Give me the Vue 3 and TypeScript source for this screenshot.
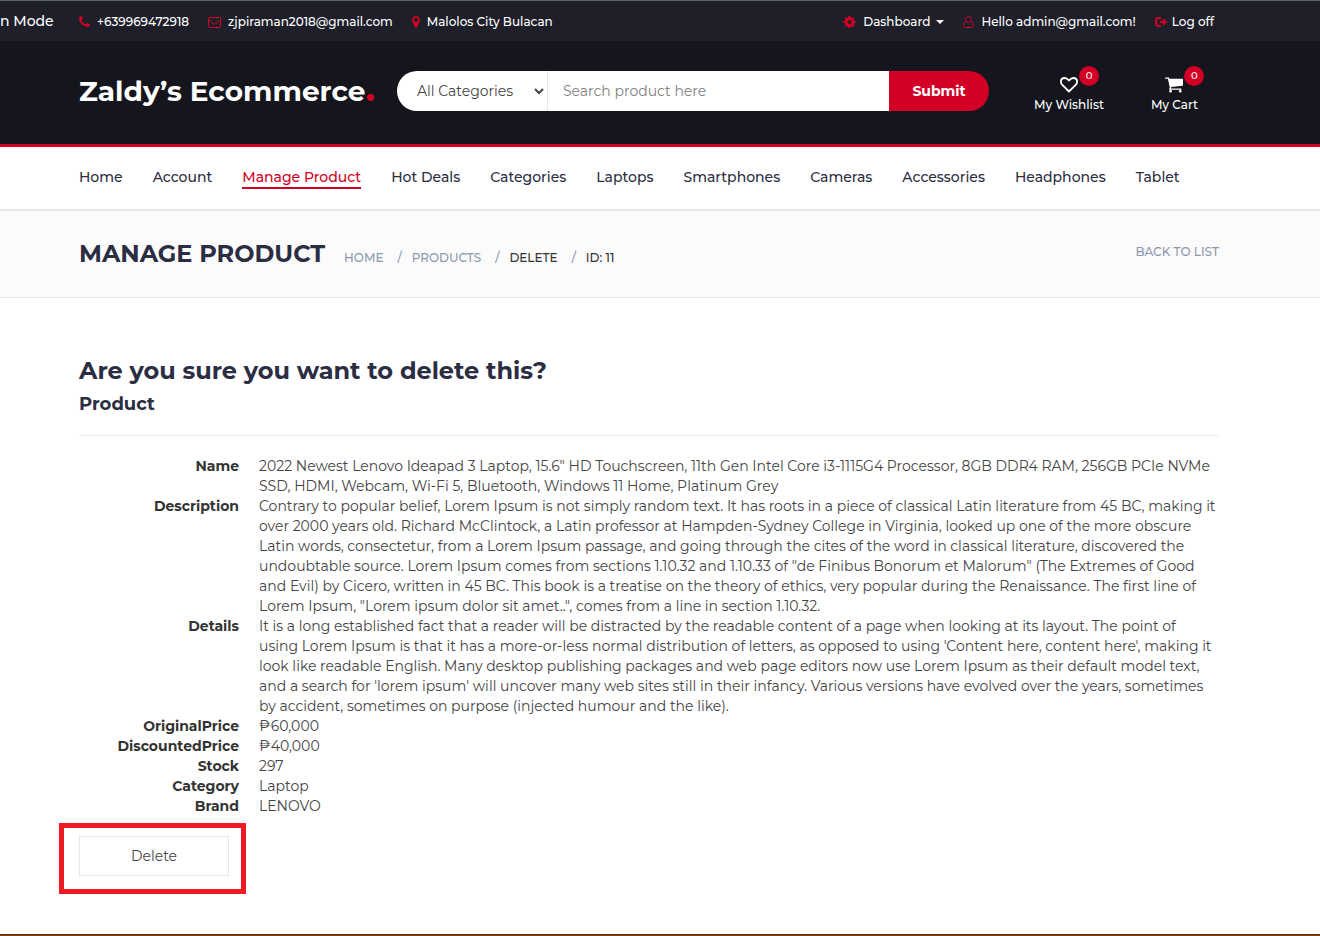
<script setup lang="ts">
import { ref } from 'vue'

interface NavLink { label: string; active?: boolean }
interface Field { term: string; value: string }

const phonePath = 'M1600 1240q0 27-10 70.5t-21 68.5q-21 50-122 106-94 51-186 51-27 0-53-3.5t-57.5-12.5-47-14.5-55.5-20.5-49-18q-98-35-175-83-127-79-264-216t-216-264q-48-77-83-175-3-9-18-49t-20.5-55.5-14.5-47-12.5-57.5-3.5-53q0-92 51-186 56-101 106-122 25-11 68.5-21t70.5-10q14 0 21 3 18 6 53 76 11 19 30 54t35 63.5 31 53.5q3 4 17.5 25t21.5 35.5 7 28.5q0 20-28.5 50t-62 55-62 53-28.5 46q0 9 5 22.5t8.5 20.5 14 24 11.5 19q76 137 174 235t235 174q2 1 19 11.5t24 14 20.5 8.5 22.5 5q18 0 46-28.5t53-62 55-62 50-28.5q14 0 28.5 7t35.5 21.5 25 17.5q25 15 53.5 31t63.5 35 54 30q70 35 76 53 3 7 3 21z'
const markerPath = 'M1152 640q0-106-75-181t-181-75-181 75-75 181 75 181 181 75 181-75 75-181zm256 0q0 109-33 179l-364 774q-16 33-47.5 52t-67.5 19-67.5-19-46.5-52l-365-774q-33-70-33-179 0-212 150-362t362-150 362 150 150 362z'
const cogPath = 'M1152 896q0-106-75-181t-181-75-181 75-75 181 75 181 181 75 181-75 75-181zm512-109v222q0 12-8 23t-20 13l-185 28q-19 54-39 91 35 50 107 138 10 12 10 25t-9 23q-27 37-99 108t-94 71q-12 0-26-9l-138-108q-44 23-91 38-16 136-29 186-7 28-36 28h-222q-14 0-24.5-8.5t-11.5-21.5l-28-184q-49-16-90-37l-141 107q-10 9-25 9-14 0-25-11-126-114-165-168-7-10-7-23 0-12 8-23 15-21 51-66.5t54-70.5q-27-50-41-99l-183-27q-13-2-21-12.5t-8-23.5v-222q0-12 8-23t19-13l186-28q14-46 39-92-40-57-107-138-10-12-10-24 0-10 9-23 26-36 98.5-107.5t94.5-71.5q13 0 26 10l138 107q44-23 91-38 16-136 29-186 7-28 36-28h222q14 0 24.5 8.5t11.5 21.5l28 184q49 16 90 37l142-107q9-9 24-9 13 0 25 10 129 119 165 170 7 8 7 22 0 12-8 23-15 21-51 66.5t-54 70.5q26 50 41 98l183 28q13 2 21 12.5t8 23.5z'
const cartPath = 'M704 1536q0 52-38 90t-90 38-90-38-38-90 38-90 90-38 90 38 38 90zm896 0q0 52-38 90t-90 38-90-38-38-90 38-90 90-38 90 38 38 90zm128-1088v512q0 24-16.5 42.5t-40.5 21.5l-1044 122q13 60 13 70 0 16-24 64h920q26 0 45 19t19 45-19 45-45 19h-1024q-26 0-45-19t-19-45q0-11 8-31.5t16-36 21.5-40 15.5-29.5l-177-823h-204q-26 0-45-19t-19-45 19-45 45-19h256q16 0 28.5 6.5t19.5 15.5 13 24.5 8 26 5.5 29.5 4.5 26h1201q26 0 45 19t19 45z'

const navLinks: NavLink[] = [
  { label: 'Home' },
  { label: 'Account' },
  { label: 'Manage Product', active: true },
  { label: 'Hot Deals' },
  { label: 'Categories' },
  { label: 'Laptops' },
  { label: 'Smartphones' },
  { label: 'Cameras' },
  { label: 'Accessories' },
  { label: 'Headphones' },
  { label: 'Tablet' },
]

const fields: Field[] = [
  { term: 'Name', value: '2022 Newest Lenovo Ideapad 3 Laptop, 15.6" HD Touchscreen, 11th Gen Intel Core i3-1115G4 Processor, 8GB DDR4 RAM, 256GB PCIe NVMe SSD, HDMI, Webcam, Wi-Fi 5, Bluetooth, Windows 11 Home, Platinum Grey' },
  { term: 'Description', value: 'Contrary to popular belief, Lorem Ipsum is not simply random text. It has roots in a piece of classical Latin literature from 45 BC, making it over 2000 years old. Richard McClintock, a Latin professor at Hampden-Sydney College in Virginia, looked up one of the more obscure Latin words, consectetur, from a Lorem Ipsum passage, and going through the cites of the word in classical literature, discovered the undoubtable source. Lorem Ipsum comes from sections 1.10.32 and 1.10.33 of "de Finibus Bonorum et Malorum" (The Extremes of Good and Evil) by Cicero, written in 45 BC. This book is a treatise on the theory of ethics, very popular during the Renaissance. The first line of Lorem Ipsum, "Lorem ipsum dolor sit amet..", comes from a line in section 1.10.32.' },
  { term: 'Details', value: "It is a long established fact that a reader will be distracted by the readable content of a page when looking at its layout. The point of using Lorem Ipsum is that it has a more-or-less normal distribution of letters, as opposed to using 'Content here, content here', making it look like readable English. Many desktop publishing packages and web page editors now use Lorem Ipsum as their default model text, and a search for 'lorem ipsum' will uncover many web sites still in their infancy. Various versions have evolved over the years, sometimes by accident, sometimes on purpose (injected humour and the like)." },
  { term: 'OriginalPrice', value: '₱60,000' },
  { term: 'DiscountedPrice', value: '₱40,000' },
  { term: 'Stock', value: '297' },
  { term: 'Category', value: 'Laptop' },
  { term: 'Brand', value: 'LENOVO' },
]

const category = ref('All Categories')
const query = ref('')
</script>

<template>
  <div class="page">
    <div class="topbar">
      <span class="mode">n Mode</span>
      <div class="container topbar-row">
        <div class="group">
          <a href="#" class="top-link">
            <svg class="icon w11" viewBox="192 0 1408 1792"><path :d="phonePath" /></svg>+639969472918
          </a>
          <a href="#" class="top-link">
            <svg class="icon line w13" viewBox="0 0 13 14"><rect x="0.5" y="2.5" width="12" height="10" rx="1" /><path d="M0.5 4.8l4.6 3.7q1.4 1 2.8 0L12.5 4.8" /></svg>zjpiraman2018@gmail.com
          </a>
          <a href="#" class="top-link">
            <svg class="icon w8" viewBox="384 0 1024 1792"><path :d="markerPath" /></svg>Malolos City Bulacan
          </a>
        </div>
        <div class="group session">
          <a href="#" class="top-link">
            <svg class="icon w13" viewBox="128 0 1536 1792"><path :d="cogPath" /></svg>Dashboard<i class="caret"></i>
          </a>
          <a href="#" class="top-link">
            <svg class="icon line w11" viewBox="0 0 11 14"><circle cx="5.5" cy="4.5" r="3" /><path d="M2.8 6.6Q.5 7.4.5 10.5.5 12.5 2.5 12.5H8.5Q10.5 12.5 10.5 10.5 10.5 7.4 8.2 6.6" /></svg>Hello admin@gmail.com!
          </a>
          <a href="#" class="top-link">
            <svg class="icon exit" viewBox="0 0 13 14"><path d="M6 2H3Q0 2 0 5V9Q0 12 3 12H6V10H3Q2 10 2 9V5Q2 4 3 4H6ZM5 6H8V3.4L12.6 7 8 10.6V8H5Z" /></svg>Log off
          </a>
        </div>
      </div>
    </div>

    <header class="header">
      <div class="container header-row">
        <a href="#" class="logo">Zaldy’s Ecommerce<span class="dot">.</span></a>
        <form class="search" @submit.prevent>
          <select v-model="category" class="select" aria-label="Category">
            <option>All Categories</option>
          </select>
          <input v-model="query" class="input" type="text" placeholder="Search product here" aria-label="Search product">
          <button class="submit" type="submit">Submit</button>
        </form>
        <div class="shop-links">
          <a href="#" class="shop-link">
            <svg class="shop-icon heart" viewBox="0 0 20 18"><path d="M10 16.2L2.8 9.2Q1 7.4 1 5.3 1 1.2 5.2 1.2 7.5 1.2 10 4 12.5 1.2 14.8 1.2 19 1.2 19 5.3 19 7.4 17.2 9.2Z" /></svg>
            <span>My Wishlist</span>
            <span class="badge">0</span>
          </a>
          <a href="#" class="shop-link">
            <svg class="shop-icon" viewBox="64 192 1664 1536"><path :d="cartPath" /></svg>
            <span>My Cart</span>
            <span class="badge">0</span>
          </a>
        </div>
      </div>
    </header>

    <nav class="nav">
      <div class="container nav-row">
        <a v-for="link in navLinks" :key="link.label" href="#" class="nav-link" :class="{ active: link.active }">{{ link.label }}</a>
      </div>
    </nav>

    <section class="crumb-bar">
      <div class="container crumb-row">
        <h3 class="crumb-title">MANAGE PRODUCT</h3>
        <ol class="crumbs">
          <li><a href="#">HOME</a></li>
          <li><a href="#">PRODUCTS</a></li>
          <li class="current">DELETE</li>
          <li class="current">ID: 11</li>
        </ol>
        <a href="#" class="back">BACK TO LIST</a>
      </div>
    </section>

    <main class="container main">
      <h3 class="question">Are you sure you want to delete this?</h3>
      <h4 class="subject">Product</h4>
      <hr class="rule">
      <dl class="fields">
        <template v-for="field in fields" :key="field.term">
          <dt>{{ field.term }}</dt>
          <dd>{{ field.value }}</dd>
        </template>
      </dl>
      <form class="delete-frame" @submit.prevent>
        <button type="submit" class="delete">Delete</button>
      </form>
    </main>
    <div class="footer-edge"></div>
  </div>
</template>

<style>
body { margin: 0; background: #fff; }
</style>

<style scoped>
* { box-sizing: border-box; }
.page {
  font-family: Montserrat, Inter, "Noto Sans", sans-serif;
  font-size: 14px;
  line-height: 20px;
  font-weight: 400;
  color: #333;
  overflow-x: hidden;
}
a { color: inherit; text-decoration: none; }
.container { max-width: 1164px; margin: 0 auto; padding: 0 23px 0 1px; }

.topbar { position: relative; background: #1e1f29; border-top: 1px solid #5f6360; color: #fff; }
.mode { position: absolute; left: 0; top: 10px; font-weight: 500; }
.topbar-row { display: flex; justify-content: space-between; height: 40px; align-items: center; padding-top: 2px; }
.group { display: flex; gap: 19px; }
.session { padding-right: 5px; }
.top-link { display: flex; align-items: center; font-size: 12px; font-weight: 500; white-space: nowrap; }
.icon { height: 14px; margin-right: 7px; fill: #d10024; }
.w8 { width: 8px; }
.w11 { width: 11px; }
.w13 { width: 13px; }
.exit { width: 13px; margin-right: 4px; }
.icon.line { fill: none; stroke: #d10024; stroke-width: 1; }
.caret { margin-left: 6px; border: 4px solid transparent; border-top-color: #fff; border-bottom: 0; }

.header { background: #15161d; border-bottom: 3px solid #d10024; }
.header-row { display: flex; align-items: flex-start; padding-top: 30px; padding-bottom: 29px; }
.logo { width: 318px; flex: none; height: 40px; font-size: 28px; line-height: 40px; font-weight: 700; color: #fff; white-space: nowrap; }
.dot { color: #d10024; font-size: 36px; line-height: 20px; }
.search { display: flex; width: 592px; height: 40px; }
.select {
  width: 151px; padding: 0 0 0 16px; border: 0; border-right: 1px solid #e4e7ed;
  border-radius: 40px 0 0 40px; background: #fff; color: #444; font: inherit;
}
.input { flex: 1; min-width: 0; padding: 0 15px; border: 0; background: #fff; color: #444; font: inherit; }
.input::placeholder { color: #808080; }
.submit { width: 100px; border: 0; border-radius: 0 40px 40px 0; background: #d10024; color: #fff; font: inherit; font-weight: 700; }
.shop-links { display: flex; flex: 1; justify-content: space-between; padding: 5px 21px 0 45px; }
.shop-link { position: relative; display: flex; flex-direction: column; align-items: center; gap: 1px; font-size: 12px; font-weight: 500; color: #fff; white-space: nowrap; }
.shop-icon { width: 18px; height: 18px; fill: #fff; }
.shop-icon.heart { fill: none; stroke: #fff; stroke-width: 2; }
.badge { position: absolute; left: calc(50% + 10px); top: -10px; width: 20px; height: 20px; border-radius: 50%; background: #d10024; font-size: 10px; text-align: center; }

.nav { border-bottom: 2px solid #e4e7ed; }
.nav-row { display: flex; gap: 30px; padding-top: 20px; padding-bottom: 20px; }
.nav-link { border-bottom: 2px solid transparent; color: #2b2d42; font-weight: 500; white-space: nowrap; }
.nav-link.active { border-color: #d10024; color: #d10024; }

.crumb-bar { background: #fbfbfc; border-bottom: 1px solid #e4e7ed; }
.crumb-row { display: flex; align-items: baseline; height: 86px; padding-top: 28px; }
.crumb-title { margin: 0; font-size: 24px; line-height: 30px; font-weight: 700; color: #2b2d42; }
.crumbs { display: flex; margin: 0 0 0 19px; padding: 0; list-style: none; font-size: 12px; font-weight: 500; }
.crumbs li { color: #8d99ae; }
.crumbs li + li::before { content: "/"; padding: 0 10px 0 14px; color: #8d99ae; }
.crumbs .current { color: #333; }
.back { align-self: flex-start; margin: 3px 0 0 auto; font-size: 12px; font-weight: 500; color: #8d99ae; }

.main { padding-top: 58px; padding-bottom: 40px; }
.question { margin: 0; font-size: 24px; line-height: 30px; font-weight: 700; color: #2b2d42; }
.subject { margin: 8px 0 0; font-size: 18px; line-height: 20px; font-weight: 700; color: #2b2d42; }
.rule { margin: 21px 0 20px; border: 0; border-top: 1px solid #eee; }
.fields { display: grid; grid-template-columns: 160px 1fr; column-gap: 20px; margin: 0; padding-right: 2px; }
dt { text-align: right; font-weight: 700; }
dd { margin: 0; color: #444; }
.delete-frame { width: 187px; margin: 7px 0 0 -20px; padding: 8px 15px 13px; border: 5px solid #ed1c24; }
.delete { display: block; width: 150px; height: 40px; border: 1px solid #e4e7ed; background: #fff; color: #444; font: inherit; }
.footer-edge { height: 2px; background: #843c0c; border-top: 1px solid #5c2c0c; }
</style>
